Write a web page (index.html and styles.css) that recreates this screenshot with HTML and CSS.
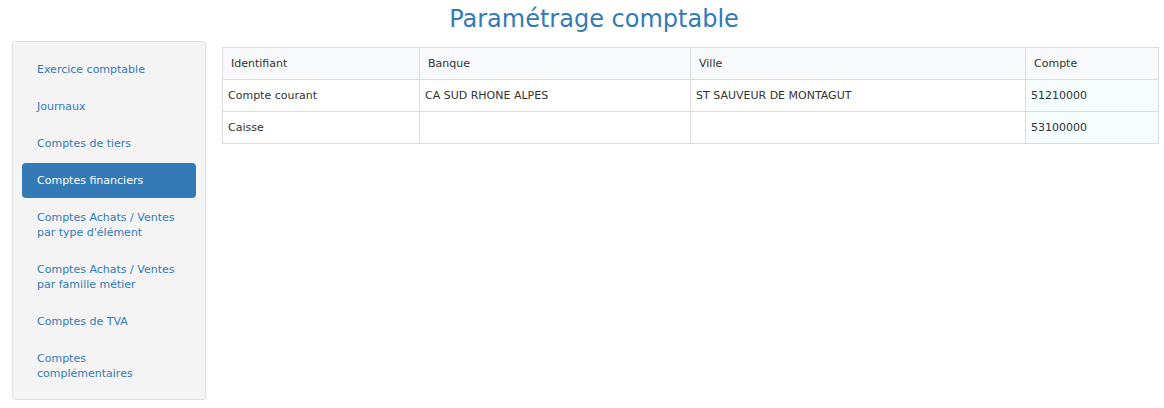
FILE: index.html
```html
<!DOCTYPE html>
<html lang="fr">
<head>
<meta charset="utf-8">
<title>Paramétrage comptable</title>
<link rel="stylesheet" href="styles.css">
</head>
<body>
<h1 class="title">Paramétrage comptable</h1>
<div class="layout">
  <nav class="sidebar">
    <ul class="pills">
      <li><a href="#">Exercice comptable</a></li>
      <li><a href="#">Journaux</a></li>
      <li><a href="#">Comptes de tiers</a></li>
      <li class="active"><a href="#">Comptes financiers</a></li>
      <li><a href="#">Comptes Achats / Ventes par type d'élément</a></li>
      <li><a href="#">Comptes Achats / Ventes par famille métier</a></li>
      <li><a href="#">Comptes de TVA</a></li>
      <li><a href="#">Comptes complémentaires</a></li>
    </ul>
  </nav>
  <main class="content">
    <table class="grid">
      <colgroup>
        <col class="c1"><col class="c2"><col class="c3"><col class="c4">
      </colgroup>
      <thead>
        <tr><th>Identifiant</th><th>Banque</th><th>Ville</th><th>Compte</th></tr>
      </thead>
      <tbody>
        <tr><td>Compte courant</td><td>CA SUD RHONE ALPES</td><td>ST SAUVEUR DE MONTAGUT</td><td class="acct">51210000</td></tr>
        <tr><td>Caisse</td><td></td><td></td><td class="acct">53100000</td></tr>
      </tbody>
    </table>
  </main>
</div>
</body>
</html>
```
FILE: styles.css
```css
html, body {
  margin: 0;
  padding: 0;
  background: #fff;
}
body {
  font-family: "DejaVu Sans", Verdana, sans-serif;
  font-size: 11px;
  color: #333;
}
.title {
  margin: 0;
  height: 36px;
  padding: 5px 0 0 24px;
  box-sizing: border-box;
  text-align: center;
  font-size: 24px;
  font-weight: normal;
  line-height: 28px;
  color: #337ab7;
}
.layout {
  display: flex;
  align-items: flex-start;
  padding: 5px 6px 0 12px;
  gap: 16px;
}
.sidebar {
  width: 194px;
  flex: none;
  box-sizing: border-box;
  background: #f4f4f4;
  border: 1px solid #e0e0e0;
  border-radius: 3px;
  padding: 10px 9px 9px 9px;
  height: 359px;
}
.pills {
  list-style: none;
  margin: 0;
  padding: 0;
  display: flex;
  flex-direction: column;
  gap: 2px;
}
.pills a {
  display: block;
  padding: 10px 15px;
  line-height: 15px;
  color: #337ab7;
  text-decoration: none;
  border-radius: 4px;
}
.pills .active a {
  background: #337ab7;
  color: #fff;
}
.content {
  flex: 1;
  padding-top: 6px;
}
.grid {
  width: 100%;
  border-collapse: collapse;
  table-layout: fixed;
  border: 1px solid #dddddd;
}
.c1 { width: 197px; }
.c2 { width: 271px; }
.c3 { width: 335px; }
.c4 { width: 133px; }
.grid th {
  background: #f8f9fa;
  font-weight: normal;
  text-align: left;
  padding: 0 8px;
  height: 31px;
  border: 1px solid #dddddd;
}
.grid td {
  padding: 0 5px;
  height: 31px;
  border: 1px solid #dddddd;
}
.grid td.acct {
  background: #f5fdff;
}
```
